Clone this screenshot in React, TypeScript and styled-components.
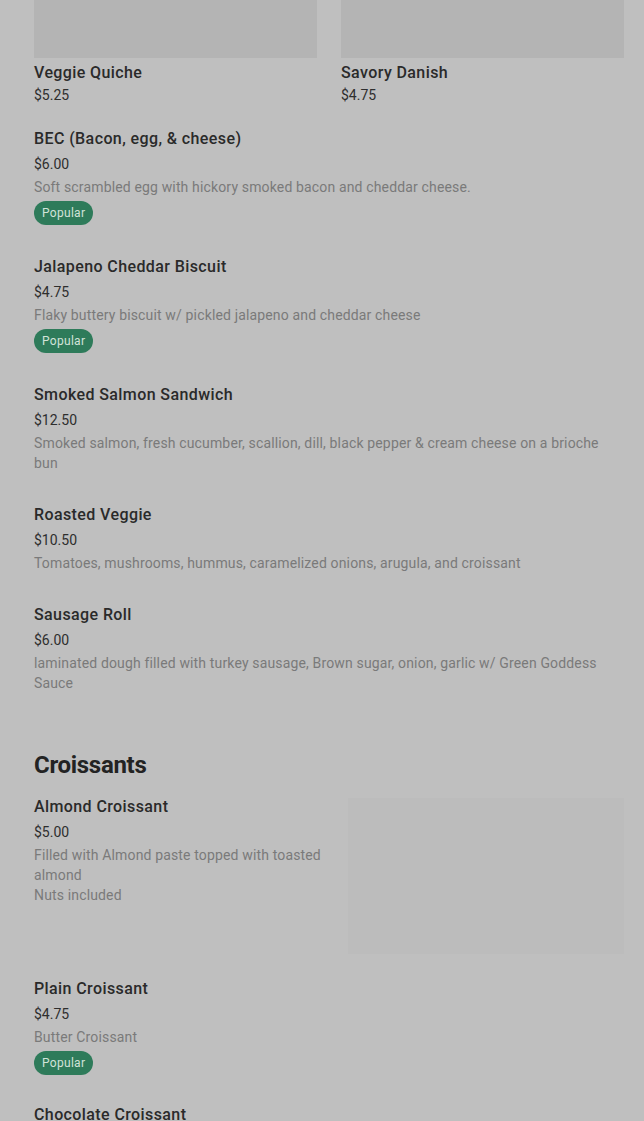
import React from "react";
import styled, { createGlobalStyle } from "styled-components";

const Global = createGlobalStyle`
  html, body { margin: 0; padding: 0; background: #bfbfbf; }
  body { font-family: Roboto, "Noto Sans", "Liberation Sans", sans-serif; -webkit-font-smoothing: antialiased; }
  * { box-sizing: border-box; }
`;

const Page = styled.div`
  padding: 0 20px 0 34px;
  height: 1121px;
  overflow: hidden;
`;

const CardGrid = styled.div`
  display: grid;
  grid-template-columns: 1fr 1fr;
  column-gap: 24px;
  margin-bottom: 21px;
`;

const Card = styled.div`
  display: flex;
  flex-direction: column;
`;

const CardImage = styled.div`
  height: 58px;
  background: #b4b4b4;
  margin-bottom: 3px;
`;

const Title = styled.div`
  font-size: 16px;
  font-weight: 500;
  line-height: 24px;
  letter-spacing: 0.4px;
  color: #2a2a2a;
`;

const Price = styled.div<{ $compact?: boolean }>`
  font-size: 14px;
  line-height: ${(p) => (p.$compact ? "21px" : "24px")};
  margin-top: ${(p) => (p.$compact ? "0" : "1px")};
  color: #2e2e2e;
`;

const Desc = styled.div`
  font-size: 14px;
  line-height: 20px;
  margin-top: 1px;
  letter-spacing: 0.15px;
  color: #7a7a7a;
  white-space: pre-line;
`;

const Badge = styled.span`
  display: inline-flex;
  align-items: center;
  align-self: flex-start;
  height: 24px;
  padding: 0 8px;
  margin-top: 4px;
  border-radius: 12px;
  background: #2e7b5a;
  color: #d2e3d9;
  font-size: 12px;
  letter-spacing: 0.3px;
`;

const Item = styled.div<{ $gap?: number }>`
  display: flex;
  flex-direction: column;
  margin-bottom: ${(p) => p.$gap ?? 30}px;
`;

const ImageItem = styled.div<{ $gap?: number }>`
  display: grid;
  grid-template-columns: 1fr 276px;
  column-gap: 14px;
  align-items: start;
  margin-bottom: ${(p) => p.$gap ?? 23}px;
`;

const ItemText = styled.div`
  display: flex;
  flex-direction: column;
`;

const ItemImage = styled.div`
  height: 156px;
  margin-top: 3px;
  background: #bcbcbc;
`;

const SectionTitle = styled.h2`
  margin: 56px 0 14px;
  font-size: 24px;
  font-weight: 700;
  line-height: 32px;
  color: #232323;
  letter-spacing: -0.3px;
`;

type MenuItem = { title: string; price: string; desc?: string; popular?: boolean };

const breakfast: MenuItem[] = [
  { title: "BEC (Bacon, egg, & cheese)", price: "$6.00", desc: "Soft scrambled egg with hickory smoked bacon and cheddar cheese.", popular: true },
  { title: "Jalapeno Cheddar Biscuit", price: "$4.75", desc: "Flaky buttery biscuit w/ pickled jalapeno and cheddar cheese", popular: true },
  { title: "Smoked Salmon Sandwich", price: "$12.50", desc: "Smoked salmon, fresh cucumber, scallion, dill, black pepper & cream cheese on a brioche bun" },
  { title: "Roasted Veggie", price: "$10.50", desc: "Tomatoes, mushrooms, hummus, caramelized onions, arugula, and croissant" },
  { title: "Sausage Roll", price: "$6.00", desc: "laminated dough filled with turkey sausage, Brown sugar, onion, garlic w/ Green Goddess Sauce" },
];

const ItemBody = ({ item }: { item: MenuItem }) => (
  <>
    <Title>{item.title}</Title>
    <Price>{item.price}</Price>
    {item.desc && <Desc>{item.desc}</Desc>}
    {item.popular && <Badge>Popular</Badge>}
  </>
);

export default function App() {
  return (
    <Page>
      <Global />
      <CardGrid>
        <Card>
          <CardImage />
          <Title>Veggie Quiche</Title>
          <Price $compact>$5.25</Price>
        </Card>
        <Card>
          <CardImage />
          <Title>Savory Danish</Title>
          <Price $compact>$4.75</Price>
        </Card>
      </CardGrid>
      {breakfast.map((item) => (
        <Item key={item.title}>
          <ItemBody item={item} />
        </Item>
      ))}
      <SectionTitle>Croissants</SectionTitle>
      <ImageItem>
        <ItemText>
          <ItemBody item={{ title: "Almond Croissant", price: "$5.00", desc: "Filled with Almond paste topped with toasted almond\nNuts included" }} />
        </ItemText>
        <ItemImage />
      </ImageItem>
      <Item $gap={28}>
        <ItemBody item={{ title: "Plain Croissant", price: "$4.75", desc: "Butter Croissant", popular: true }} />
      </Item>
      <Item>
        <Title>Chocolate Croissant</Title>
      </Item>
    </Page>
  );
}
